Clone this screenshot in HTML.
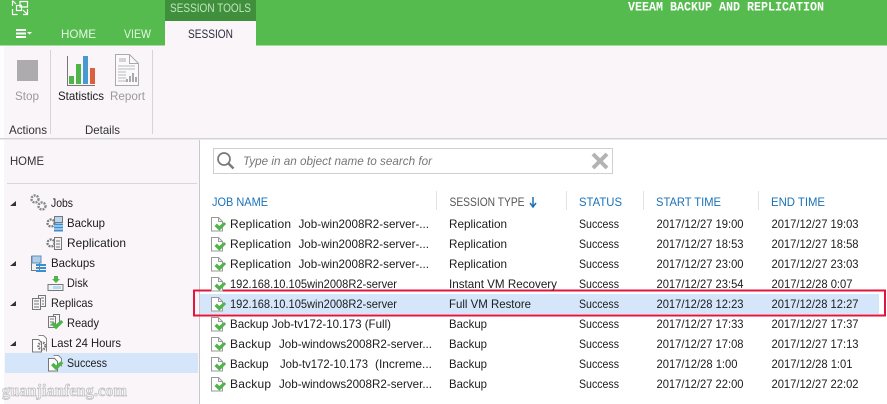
<!DOCTYPE html>
<html><head><meta charset="utf-8"><style>
html,body{margin:0;padding:0;background:#fff;width:887px;height:404px;overflow:hidden}
svg{display:block}
text{font-family:"Liberation Sans",sans-serif;font-size:12px;fill:#1c1c1c;white-space:pre}
.h{fill:#1a72b8}.g{fill:#555}.d{fill:#9a9a9a}
</style></head><body>
<svg width="887" height="404" viewBox="0 0 887 404" xmlns="http://www.w3.org/2000/svg">
<defs>
<g id="doc"><path d="M.5 1.500h7l4 4v9.500h-11z" fill="#fff" stroke="#999"/><path d="M7.500 1.500v4h4" fill="none" stroke="#999"/></g>
<path id="chk" d="M0 5l3-3 3 3 6-5 2.500 2.500-8.500 8.500z" fill="#4fb548"/>
<g id="ok"><use href="#doc"/><use href="#chk" transform="translate(3.500 6) scale(.8)"/></g>
<g id="gear"><circle cx="4" cy="4" r="3.500" fill="none" stroke="#8a8a8a" stroke-width="2.400" stroke-dasharray="2 1"/></g>
</defs>

<!-- backgrounds -->
<rect width="887" height="404" fill="#fff"/>
<rect x="4" y="45" width="883" height="93" fill="#f9f5f9"/>
<rect x="0" y="45" width="4" height="93" fill="#fdfdfd"/>
<rect x="0" y="138" width="887" height="1.500" fill="#d4d2d4"/>
<rect x="4" y="140" width="195" height="264" fill="#f9f5f9"/>
<rect x="199" y="140" width="1" height="264" fill="#c9c9c9"/>

<!-- header -->
<rect width="887" height="45" fill="#55bb4e"/>
<rect x="165" y="0" width="91" height="21" fill="#3f8f3c"/>
<rect x="165" y="21" width="91" height="25" fill="#f9f5f9"/>
<rect x="0" y="45" width="165" height="1" fill="#a5dca1"/>
<rect x="256" y="45" width="631" height="1" fill="#a5dca1"/>
<g fill="none" stroke="#fff" stroke-width="1.200">
<path d="M12.500 6v-5.500M12.500 9v5.500h5M23 14.500h4.500V9M20 1.500h7.500v5.500h-7.500z"/>
<rect x="16.500" y="5.500" width="5" height="5"/>
<path d="M13 1l3 3M23 10l4 4"/>
</g>
<g fill="#fff"><rect x="16" y="29" width="10" height="2"/><rect x="16" y="32.500" width="10" height="2"/><rect x="16" y="36" width="10" height="2"/><path d="M27 32h5l-2.500 2.500z"/></g>
<text x="170" y="12" textLength="81" lengthAdjust="spacingAndGlyphs" style="fill:#bfe8bb">SESSION TOOLS</text>
<text x="61" y="38" textLength="35" lengthAdjust="spacingAndGlyphs" style="fill:#e4f7e3">HOME</text>
<text x="124" y="38" textLength="27" lengthAdjust="spacingAndGlyphs" style="fill:#e4f7e3">VIEW</text>
<text x="188" y="38" textLength="45" lengthAdjust="spacingAndGlyphs" style="fill:#2b2b3a">SESSION</text>
<text x="628" y="10.500" textLength="196" lengthAdjust="spacingAndGlyphs" style="font-family:'Liberation Mono',monospace;font-size:13px;font-weight:bold;fill:#fff">VEEAM BACKUP AND REPLICATION</text>

<!-- ribbon -->
<rect x="17" y="60" width="21" height="21" fill="#aeabae"/>
<text x="15" y="100" textLength="24" lengthAdjust="spacingAndGlyphs" class="d">Stop</text>
<rect x="50" y="50" width="1" height="84" fill="#d6d4d6"/>
<path d="M67.500 56v29.500H95" fill="none" stroke="#777" stroke-width="1"/>
<rect x="69" y="76" width="5" height="8" fill="#4fb548"/>
<rect x="76" y="64" width="5" height="20" fill="#4fb548"/>
<rect x="83" y="56" width="5" height="28" fill="#4a98d0"/>
<rect x="90" y="68" width="5" height="16" fill="#dc5f3e"/>
<text x="58" y="100" textLength="46" lengthAdjust="spacingAndGlyphs">Statistics</text>
<path d="M115.500 54.500h14l9 9v22h-23z" fill="#fbf9fb" stroke="#aaa"/>
<path d="M129.500 54.500v9h9" fill="none" stroke="#aaa"/>
<rect x="119" y="58" width="7" height="4" fill="#d5d3d5"/>
<path d="M118 66h17M118 69h17M118 72h8M118 75h8M118 78h8M118 81h8" stroke="#bbb"/>
<path d="M127 82v-3M130 82v-6M133 82v-9M136 82v-5" stroke="#aaa" stroke-width="2"/>
<text x="110" y="100" textLength="35" lengthAdjust="spacingAndGlyphs" class="d">Report</text>
<rect x="152" y="50" width="1" height="84" fill="#d6d4d6"/>
<text x="9" y="134" textLength="38" lengthAdjust="spacingAndGlyphs" style="fill:#333">Actions</text>
<text x="85" y="134" textLength="35" lengthAdjust="spacingAndGlyphs" style="fill:#333">Details</text>

<!-- sidebar -->
<text x="10" y="165" textLength="34" lengthAdjust="spacingAndGlyphs" style="fill:#333">HOME</text>
<rect x="7" y="183" width="190" height="1" fill="#d8d6d8"/>
<rect x="5" y="353" width="193" height="20" fill="#d5e6fb"/>
<path d="M10 206l6-5v5zM10 266l6-5v5zM10 306l6-5v5zM10 346l6-5v5z" fill="#333"/>

<use href="#gear" transform="translate(31 195)"/>
<use href="#gear" transform="translate(38 202)"/>
<text x="51" y="207" textLength="22" lengthAdjust="spacingAndGlyphs">Jobs</text>

<circle cx="51" cy="223" r="3.500" fill="none" stroke="#777" stroke-width="2.200" stroke-dasharray="2 1"/>
<rect x="54.500" y="216.500" width="8" height="6" fill="#b9d7f0" stroke="#777"/>
<path d="M54 224.500h9M54 227.500h9M54 230.500h9" stroke="#3a90cf" stroke-width="2"/>
<text x="67" y="227" textLength="38" lengthAdjust="spacingAndGlyphs">Backup</text>

<circle cx="51" cy="243" r="3.500" fill="none" stroke="#777" stroke-width="2.200" stroke-dasharray="2 1"/>
<rect x="54.500" y="237.500" width="7" height="12" fill="#f3f3f3" stroke="#777"/>
<path d="M56 241h4M56 244h4M56 247h4" stroke="#777"/>
<text x="67" y="247" textLength="59" lengthAdjust="spacingAndGlyphs">Replication</text>

<rect x="31.500" y="256.500" width="8" height="14" fill="#f3f3f3" stroke="#777"/>
<rect x="32" y="256" width="9" height="7" fill="#a9cdec" stroke="#6a8fb0"/>
<path d="M36 265h10M36 268h10M36 271h10" stroke="#3a90cf" stroke-width="2"/>
<text x="51" y="267" textLength="44" lengthAdjust="spacingAndGlyphs">Backups</text>

<path d="M54 276h4v3h2l-4 4-4-4h2z" fill="#4fb548"/>
<rect x="48" y="284.500" width="15" height="6" fill="#eef3f8" stroke="#777"/>
<rect x="53" y="286" width="8" height="3" fill="#b9d7f0"/>
<text x="67" y="287" textLength="21" lengthAdjust="spacingAndGlyphs">Disk</text>

<rect x="38.500" y="295.500" width="7" height="11" fill="#f7f5f7" stroke="#777"/>
<rect x="32.500" y="298.500" width="8" height="11" fill="#f7f5f7" stroke="#777"/>
<path d="M34 301h5M34 304h5M34 307h5M41 298h3M42 301h2M42 304h2" stroke="#777"/>
<text x="51" y="307" textLength="42" lengthAdjust="spacingAndGlyphs">Replicas</text>

<rect x="53.500" y="314.500" width="6" height="10" fill="#f7f5f7" stroke="#777"/>
<rect x="48.500" y="316.500" width="7" height="11" fill="#f7f5f7" stroke="#777"/>
<path d="M50 319h4M50 322h4M50 325h4" stroke="#777"/>
<use href="#chk" transform="translate(51 320) scale(.85)"/>
<text x="67" y="327" textLength="32" lengthAdjust="spacingAndGlyphs">Ready</text>

<path d="M38.500 335.500h5l3 3v13" fill="#fff" stroke="#888"/>
<path d="M32.500 339.500h6l3 3v9.500h-9z" fill="#fff" stroke="#777"/>
<circle cx="42" cy="346" r="3.500" fill="none" stroke="#777" stroke-width="2.500" stroke-dasharray="1.500 1"/>
<text x="51" y="347" textLength="70" lengthAdjust="spacingAndGlyphs">Last 24 Hours</text>

<path d="M53.500 355.500h5l3 3v8" fill="#fff" stroke="#888"/>
<path d="M48.500 358.500h6l3 3v9.500h-9z" fill="#fff" stroke="#777"/>
<use href="#chk" transform="translate(51 361) scale(.85)"/>
<text x="67" y="367" textLength="40" lengthAdjust="spacingAndGlyphs">Success</text>

<text x="2" y="396" textLength="125" lengthAdjust="spacingAndGlyphs" style="font-family:'Liberation Serif',serif;font-size:17px;font-weight:bold;fill:#f0f0f0;stroke:#bdbdbd;stroke-width:.7px">guanjianfeng.com</text>

<!-- search -->
<rect x="213.500" y="148.500" width="399" height="25" fill="#fff" stroke="#cfcfcf"/>
<circle cx="224" cy="159" r="6" fill="none" stroke="#7a7a7a" stroke-width="1.700"/>
<path d="M228.500 163.500l5 5" stroke="#7a7a7a" stroke-width="2.400"/>
<text x="243" y="165" textLength="189" lengthAdjust="spacingAndGlyphs" style="font-style:italic;fill:#777">Type in an object name to search for</text>
<path d="M593 154l14 14M607 154l-14 14" stroke="#b3b3b3" stroke-width="4"/>

<!-- headers -->
<text x="212" y="206" textLength="56" lengthAdjust="spacingAndGlyphs" class="h">JOB NAME</text>
<text x="449.500" y="206" textLength="75" lengthAdjust="spacingAndGlyphs" class="g">SESSION TYPE</text>
<path d="M533 197v9M530 203l3 4 3-4" fill="none" stroke="#1a72b8" stroke-width="1.500"/>
<text x="579" y="206" textLength="43" lengthAdjust="spacingAndGlyphs" class="h">STATUS</text>
<text x="656" y="206" textLength="65" lengthAdjust="spacingAndGlyphs" class="h">START TIME</text>
<text x="771" y="206" textLength="54" lengthAdjust="spacingAndGlyphs" class="h">END TIME</text>
<path d="M436.500 191v19M566.500 191v19M643.500 191v19M758.500 191v19" stroke="#e3e3e3"/>

<!-- selected row -->
<rect x="200" y="294" width="679" height="20" fill="#d5e6fb"/>
<rect x="194" y="290.500" width="691" height="25" fill="none" stroke="#e2153c" stroke-width="2"/>

<!-- rows -->
<use href="#ok" x="211" y="216"/><use href="#ok" x="211" y="236"/><use href="#ok" x="211" y="256"/><use href="#ok" x="211" y="276"/><use href="#ok" x="211" y="296"/><use href="#ok" x="211" y="316"/><use href="#ok" x="211" y="336"/><use href="#ok" x="211" y="356"/><use href="#ok" x="211" y="376"/>

<text x="230" y="228" textLength="61">Replication</text><text x="298.500" y="228" textLength="130.500" lengthAdjust="spacingAndGlyphs">Job-win2008R2-server-...</text>
<text x="449" y="228" textLength="58" lengthAdjust="spacingAndGlyphs">Replication</text>
<text x="579" y="228" textLength="40" lengthAdjust="spacingAndGlyphs">Success</text>
<text x="656.500" y="228" textLength="87" lengthAdjust="spacingAndGlyphs">2017/12/27 19:00</text>
<text x="771.500" y="228" textLength="87" lengthAdjust="spacingAndGlyphs">2017/12/27 19:03</text>

<text x="230" y="248" textLength="61">Replication</text><text x="298.500" y="248" textLength="130.500" lengthAdjust="spacingAndGlyphs">Job-win2008R2-server-...</text>
<text x="449" y="248" textLength="58" lengthAdjust="spacingAndGlyphs">Replication</text>
<text x="579" y="248" textLength="40" lengthAdjust="spacingAndGlyphs">Success</text>
<text x="656.500" y="248" textLength="87" lengthAdjust="spacingAndGlyphs">2017/12/27 18:53</text>
<text x="771.500" y="248" textLength="87" lengthAdjust="spacingAndGlyphs">2017/12/27 18:58</text>

<text x="230" y="268" textLength="61">Replication</text><text x="298.500" y="268" textLength="130.500" lengthAdjust="spacingAndGlyphs">Job-win2008R2-server-...</text>
<text x="449" y="268" textLength="58" lengthAdjust="spacingAndGlyphs">Replication</text>
<text x="579" y="268" textLength="40" lengthAdjust="spacingAndGlyphs">Success</text>
<text x="656.500" y="268" textLength="87" lengthAdjust="spacingAndGlyphs">2017/12/27 23:00</text>
<text x="771.500" y="268" textLength="87" lengthAdjust="spacingAndGlyphs">2017/12/27 23:03</text>

<text x="230" y="288" textLength="167" lengthAdjust="spacingAndGlyphs">192.168.10.105win2008R2-server</text>
<text x="449" y="288" textLength="108" lengthAdjust="spacingAndGlyphs">Instant VM Recovery</text>
<text x="579" y="288" textLength="40" lengthAdjust="spacingAndGlyphs">Success</text>
<text x="656.500" y="288" textLength="87" lengthAdjust="spacingAndGlyphs">2017/12/27 23:54</text>
<text x="771.500" y="288" textLength="81" lengthAdjust="spacingAndGlyphs">2017/12/28 0:07</text>

<text x="230" y="308" textLength="167" lengthAdjust="spacingAndGlyphs">192.168.10.105win2008R2-server</text>
<text x="449" y="308" textLength="82" lengthAdjust="spacingAndGlyphs">Full VM Restore</text>
<text x="579" y="308" textLength="40" lengthAdjust="spacingAndGlyphs">Success</text>
<text x="656.500" y="308" textLength="87" lengthAdjust="spacingAndGlyphs">2017/12/28 12:23</text>
<text x="771.500" y="308" textLength="87" lengthAdjust="spacingAndGlyphs">2017/12/28 12:27</text>

<text x="230" y="328" textLength="161" lengthAdjust="spacingAndGlyphs">Backup Job-tv172-10.173 (Full)</text>
<text x="449" y="328" textLength="38" lengthAdjust="spacingAndGlyphs">Backup</text>
<text x="579" y="328" textLength="40" lengthAdjust="spacingAndGlyphs">Success</text>
<text x="656.500" y="328" textLength="87" lengthAdjust="spacingAndGlyphs">2017/12/27 17:33</text>
<text x="771.500" y="328" textLength="87" lengthAdjust="spacingAndGlyphs">2017/12/27 17:37</text>

<text x="230" y="348" textLength="41">Backup</text><text x="279" y="348" textLength="153" lengthAdjust="spacingAndGlyphs">Job-windows2008R2-server...</text>
<text x="449" y="348" textLength="38" lengthAdjust="spacingAndGlyphs">Backup</text>
<text x="579" y="348" textLength="40" lengthAdjust="spacingAndGlyphs">Success</text>
<text x="656.500" y="348" textLength="87" lengthAdjust="spacingAndGlyphs">2017/12/27 17:08</text>
<text x="771.500" y="348" textLength="87" lengthAdjust="spacingAndGlyphs">2017/12/27 17:13</text>

<text x="230" y="368" textLength="38.500" lengthAdjust="spacingAndGlyphs">Backup</text><text x="280" y="368" textLength="88" lengthAdjust="spacingAndGlyphs">Job-tv172-10.173</text><text x="375" y="368" textLength="57" lengthAdjust="spacingAndGlyphs">(Increme...</text>
<text x="449" y="368" textLength="38" lengthAdjust="spacingAndGlyphs">Backup</text>
<text x="579" y="368" textLength="40" lengthAdjust="spacingAndGlyphs">Success</text>
<text x="656.500" y="368" textLength="81" lengthAdjust="spacingAndGlyphs">2017/12/28 1:00</text>
<text x="771.500" y="368" textLength="81" lengthAdjust="spacingAndGlyphs">2017/12/28 1:01</text>

<text x="230" y="388" textLength="41">Backup</text><text x="279" y="388" textLength="153" lengthAdjust="spacingAndGlyphs">Job-windows2008R2-server...</text>
<text x="449" y="388" textLength="38" lengthAdjust="spacingAndGlyphs">Backup</text>
<text x="579" y="388" textLength="40" lengthAdjust="spacingAndGlyphs">Success</text>
<text x="656.500" y="388" textLength="87" lengthAdjust="spacingAndGlyphs">2017/12/27 22:00</text>
<text x="771.500" y="388" textLength="87" lengthAdjust="spacingAndGlyphs">2017/12/27 22:02</text>
</svg>
</body></html>
